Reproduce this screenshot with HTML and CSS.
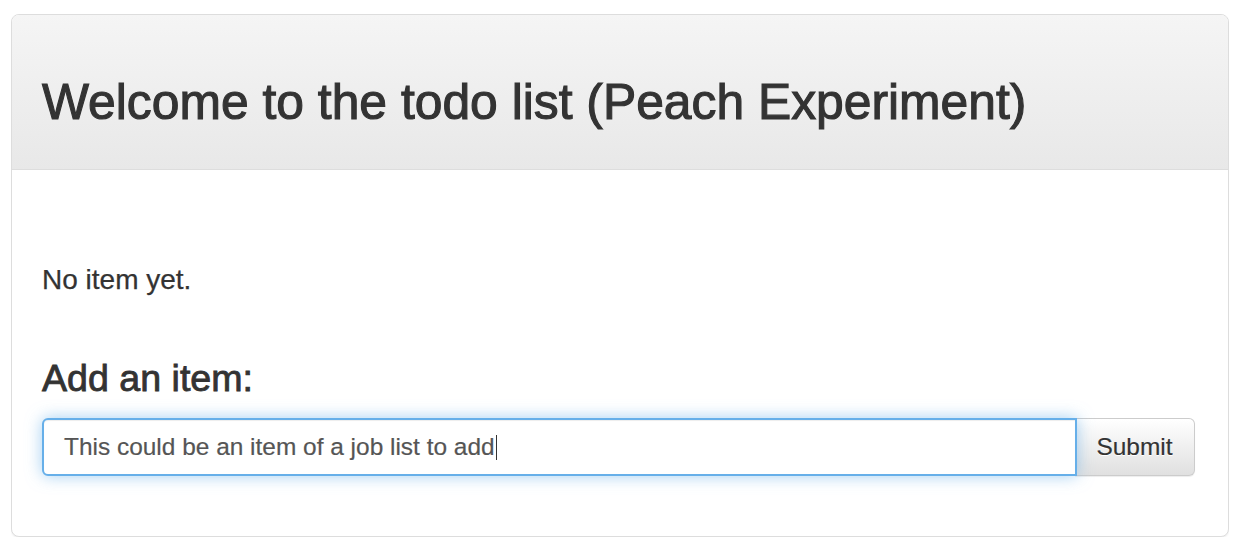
FILE: index.html
```html
<!DOCTYPE html>
<html>
<head>
<meta charset="utf-8">
<link rel="stylesheet" href="styles.css">
</head>
<body>
<div class="panel">
  <div class="panel-heading">
    <h3 class="panel-title">Welcome to the todo list (Peach Experiment)</h3>
  </div>
  <div class="panel-body">
    <p class="empty">No item yet.</p>
    <h4 class="add-title">Add an item:</h4>
    <form class="input-group">
      <div class="form-control"><span class="value">This could be an item of a job list to add</span><span class="caret"></span></div>
      <button type="button" class="btn">Submit</button>
    </form>
  </div>
</div>
</body>
</html>
```
FILE: styles.css
```css
html, body {
  background: #fff;
}
body {
  margin: 14px 19px 0 11px;
  font-family: "Liberation Sans", Arial, Helvetica, sans-serif;
  color: #333;
  font-size: 28px;
  line-height: 40px;
}
.panel {
  border: 1px solid #ddd;
  border-radius: 8px;
  box-shadow: 0 1px 2px rgba(0,0,0,0.07);
  overflow: hidden;
  background: #fff;
}
.panel-heading {
  padding: 60px 30px 39px;
  background: linear-gradient(to bottom, #f5f5f5 0%, #e8e8e8 100%);
  border-bottom: 1px solid #ddd;
}
.panel-title {
  margin: 0;
  font-size: 49.8px;
  line-height: 55px;
  font-weight: normal;
  color: #333;
  -webkit-text-stroke: 1.1px #333;
}
.panel-body {
  padding: 90px 30px 60px;
}
.empty {
  margin: 0;
  -webkit-text-stroke: 0.25px #333;
}
.add-title {
  margin: 58px 0 0;
  font-size: 37.6px;
  line-height: 40px;
  font-weight: normal;
  color: #333;
  -webkit-text-stroke: 0.85px #333;
}
.input-group {
  display: flex;
  margin: 20px 3px 0 0;
}
.form-control {
  flex: 1;
  height: 58px;
  box-sizing: border-box;
  border: 2px solid #66afe9;
  border-radius: 6px 0 0 6px;
  padding: 9px 20px;
  font-size: 24.45px;
  line-height: 36px;
  color: #555;
  -webkit-text-stroke: 0.2px #555;
  box-shadow: inset 0 1px 1px rgba(0,0,0,0.075), 0 0 16px rgba(102,175,233,0.6);
  display: flex;
  align-items: center;
  position: relative;
  z-index: 1;
  background: #fff;
}
.caret {
  display: inline-block;
  width: 1.5px;
  height: 25px;
  background: #333;
  margin-left: 1px;
}
.btn {
  height: 58px;
  box-sizing: border-box;
  margin-left: -2px;
  padding: 0 20px;
  border: 1px solid #ccc;
  border-left: none;
  border-radius: 0 6px 6px 0;
  background: linear-gradient(to bottom, #ffffff 0%, #e0e0e0 100%);
  font-family: "Liberation Sans", Arial, Helvetica, sans-serif;
  font-size: 24.45px;
  line-height: 36px;
  color: #333;
  -webkit-text-stroke: 0.2px #333;
  text-shadow: 0 1px 0 #fff;
  box-shadow: inset 0 1px 0 rgba(255,255,255,0.15), 0 1px 1px rgba(0,0,0,0.075);
  cursor: pointer;
  width: 120px;
}
```
